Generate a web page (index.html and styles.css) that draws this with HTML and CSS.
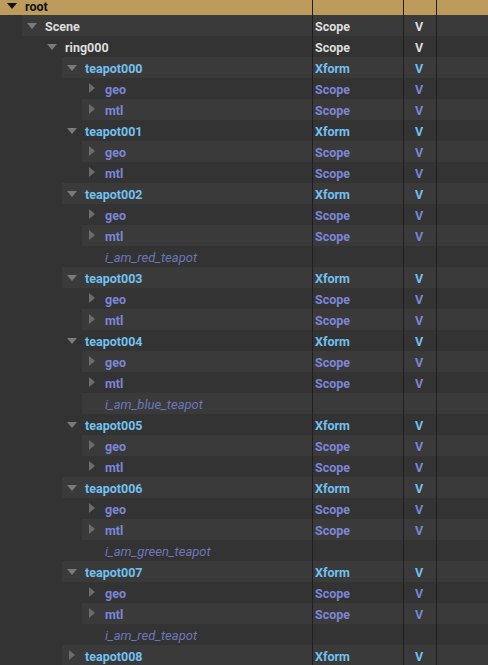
FILE: index.html
```html
<!DOCTYPE html>
<html>
<head>
<meta charset="utf-8">
<link rel="stylesheet" href="styles.css">
</head>
<body>
<div class="tree">
  <div class="row header">
    <div class="name l0"><div class="node"><span class="tri down dark"></span><span class="label">root</span></div></div>
    <div class="col c1"></div><div class="col c2"></div><div class="col c3"></div>
  </div>

  <div class="row odd">
    <div class="name l1"><div class="node"><span class="tri down"></span><span class="label white">Scene</span></div></div>
    <div class="col c1 white">Scope</div><div class="col c2 white">V</div><div class="col c3"></div>
  </div>
  <div class="row">
    <div class="name l2"><div class="node"><span class="tri down"></span><span class="label white">ring000</span></div></div>
    <div class="col c1 white">Scope</div><div class="col c2 white">V</div><div class="col c3"></div>
  </div>

  <div class="row odd">
    <div class="name l3"><div class="node"><span class="tri down"></span><span class="label blue">teapot000</span></div></div>
    <div class="col c1 blue">Xform</div><div class="col c2 blue">V</div><div class="col c3"></div>
  </div>
  <div class="row">
    <div class="name l4"><div class="node"><span class="tri right"></span><span class="label purple">geo</span></div></div>
    <div class="col c1 purple">Scope</div><div class="col c2 purple">V</div><div class="col c3"></div>
  </div>
  <div class="row odd">
    <div class="name l4"><div class="node"><span class="tri right"></span><span class="label purple">mtl</span></div></div>
    <div class="col c1 purple">Scope</div><div class="col c2 purple">V</div><div class="col c3"></div>
  </div>

  <div class="row">
    <div class="name l3"><div class="node"><span class="tri down"></span><span class="label blue">teapot001</span></div></div>
    <div class="col c1 blue">Xform</div><div class="col c2 blue">V</div><div class="col c3"></div>
  </div>
  <div class="row odd">
    <div class="name l4"><div class="node"><span class="tri right"></span><span class="label purple">geo</span></div></div>
    <div class="col c1 purple">Scope</div><div class="col c2 purple">V</div><div class="col c3"></div>
  </div>
  <div class="row">
    <div class="name l4"><div class="node"><span class="tri right"></span><span class="label purple">mtl</span></div></div>
    <div class="col c1 purple">Scope</div><div class="col c2 purple">V</div><div class="col c3"></div>
  </div>

  <div class="row odd">
    <div class="name l3"><div class="node"><span class="tri down"></span><span class="label blue">teapot002</span></div></div>
    <div class="col c1 blue">Xform</div><div class="col c2 blue">V</div><div class="col c3"></div>
  </div>
  <div class="row">
    <div class="name l4"><div class="node"><span class="tri right"></span><span class="label purple">geo</span></div></div>
    <div class="col c1 purple">Scope</div><div class="col c2 purple">V</div><div class="col c3"></div>
  </div>
  <div class="row odd">
    <div class="name l4"><div class="node"><span class="tri right"></span><span class="label purple">mtl</span></div></div>
    <div class="col c1 purple">Scope</div><div class="col c2 purple">V</div><div class="col c3"></div>
  </div>
  <div class="row">
    <div class="name l4"><div class="node"><span class="tri none"></span><span class="label note">i_am_red_teapot</span></div></div>
    <div class="col c1"></div><div class="col c2"></div><div class="col c3"></div>
  </div>

  <div class="row odd">
    <div class="name l3"><div class="node"><span class="tri down"></span><span class="label blue">teapot003</span></div></div>
    <div class="col c1 blue">Xform</div><div class="col c2 blue">V</div><div class="col c3"></div>
  </div>
  <div class="row">
    <div class="name l4"><div class="node"><span class="tri right"></span><span class="label purple">geo</span></div></div>
    <div class="col c1 purple">Scope</div><div class="col c2 purple">V</div><div class="col c3"></div>
  </div>
  <div class="row odd">
    <div class="name l4"><div class="node"><span class="tri right"></span><span class="label purple">mtl</span></div></div>
    <div class="col c1 purple">Scope</div><div class="col c2 purple">V</div><div class="col c3"></div>
  </div>

  <div class="row">
    <div class="name l3"><div class="node"><span class="tri down"></span><span class="label blue">teapot004</span></div></div>
    <div class="col c1 blue">Xform</div><div class="col c2 blue">V</div><div class="col c3"></div>
  </div>
  <div class="row odd">
    <div class="name l4"><div class="node"><span class="tri right"></span><span class="label purple">geo</span></div></div>
    <div class="col c1 purple">Scope</div><div class="col c2 purple">V</div><div class="col c3"></div>
  </div>
  <div class="row">
    <div class="name l4"><div class="node"><span class="tri right"></span><span class="label purple">mtl</span></div></div>
    <div class="col c1 purple">Scope</div><div class="col c2 purple">V</div><div class="col c3"></div>
  </div>
  <div class="row odd">
    <div class="name l4"><div class="node"><span class="tri none"></span><span class="label note">i_am_blue_teapot</span></div></div>
    <div class="col c1"></div><div class="col c2"></div><div class="col c3"></div>
  </div>

  <div class="row">
    <div class="name l3"><div class="node"><span class="tri down"></span><span class="label blue">teapot005</span></div></div>
    <div class="col c1 blue">Xform</div><div class="col c2 blue">V</div><div class="col c3"></div>
  </div>
  <div class="row odd">
    <div class="name l4"><div class="node"><span class="tri right"></span><span class="label purple">geo</span></div></div>
    <div class="col c1 purple">Scope</div><div class="col c2 purple">V</div><div class="col c3"></div>
  </div>
  <div class="row">
    <div class="name l4"><div class="node"><span class="tri right"></span><span class="label purple">mtl</span></div></div>
    <div class="col c1 purple">Scope</div><div class="col c2 purple">V</div><div class="col c3"></div>
  </div>

  <div class="row odd">
    <div class="name l3"><div class="node"><span class="tri down"></span><span class="label blue">teapot006</span></div></div>
    <div class="col c1 blue">Xform</div><div class="col c2 blue">V</div><div class="col c3"></div>
  </div>
  <div class="row">
    <div class="name l4"><div class="node"><span class="tri right"></span><span class="label purple">geo</span></div></div>
    <div class="col c1 purple">Scope</div><div class="col c2 purple">V</div><div class="col c3"></div>
  </div>
  <div class="row odd">
    <div class="name l4"><div class="node"><span class="tri right"></span><span class="label purple">mtl</span></div></div>
    <div class="col c1 purple">Scope</div><div class="col c2 purple">V</div><div class="col c3"></div>
  </div>
  <div class="row">
    <div class="name l4"><div class="node"><span class="tri none"></span><span class="label note">i_am_green_teapot</span></div></div>
    <div class="col c1"></div><div class="col c2"></div><div class="col c3"></div>
  </div>

  <div class="row odd">
    <div class="name l3"><div class="node"><span class="tri down"></span><span class="label blue">teapot007</span></div></div>
    <div class="col c1 blue">Xform</div><div class="col c2 blue">V</div><div class="col c3"></div>
  </div>
  <div class="row">
    <div class="name l4"><div class="node"><span class="tri right"></span><span class="label purple">geo</span></div></div>
    <div class="col c1 purple">Scope</div><div class="col c2 purple">V</div><div class="col c3"></div>
  </div>
  <div class="row odd">
    <div class="name l4"><div class="node"><span class="tri right"></span><span class="label purple">mtl</span></div></div>
    <div class="col c1 purple">Scope</div><div class="col c2 purple">V</div><div class="col c3"></div>
  </div>
  <div class="row">
    <div class="name l4"><div class="node"><span class="tri none"></span><span class="label note">i_am_red_teapot</span></div></div>
    <div class="col c1"></div><div class="col c2"></div><div class="col c3"></div>
  </div>

  <div class="row odd">
    <div class="name l3"><div class="node"><span class="tri right"></span><span class="label blue">teapot008</span></div></div>
    <div class="col c1 blue">Xform</div><div class="col c2 blue">V</div><div class="col c3"></div>
  </div>
</div>
</body>
</html>
```

FILE: styles.css
```css
html, body {
  margin: 0;
  padding: 0;
  background: #333333;
  overflow: hidden;
}

.tree {
  width: 488px;
  font-family: Roboto, "Liberation Sans", sans-serif;
  font-size: 12.5px;
  font-weight: bold;
}

.row {
  display: flex;
  height: 21px;
  background: #333333;
}

.name {
  width: 312px;
  flex: none;
  display: flex;
  box-sizing: border-box;
}

.l0 { padding-left: 2px; }
.l1 { padding-left: 22px; }
.l2 { padding-left: 42px; }
.l3 { padding-left: 62px; }
.l4 { padding-left: 82px; }

.node {
  flex: 1;
  display: flex;
  align-items: center;
  padding-top: 1px;
}

.odd .node,
.odd .col {
  background: #3a3a3a;
}

.row.header {
  height: 15px;
}

.header,
.header .node,
.header .col {
  background: #bd9b5c;
}

.header .node {
  align-items: flex-start;
  padding-top: 0;
}

.header .label {
  line-height: 13px;
}

.tri {
  width: 23px;
  height: 21px;
  flex: none;
  position: relative;
}

.header .tri {
  height: 15px;
}

.tri.down::before {
  content: "";
  position: absolute;
  left: 5px;
  top: 7px;
  border-left: 5.5px solid transparent;
  border-right: 5.5px solid transparent;
  border-top: 6px solid #7a7a7a;
}

.tri.dark.down::before {
  top: 3px;
  border-top-color: #111111;
}

.tri.right::before {
  content: "";
  position: absolute;
  left: 7px;
  top: 4px;
  border-top: 5.5px solid transparent;
  border-bottom: 5.5px solid transparent;
  border-left: 6px solid #6c6c6c;
}

.label {
  white-space: nowrap;
  color: #111111;
}

.col {
  display: flex;
  align-items: center;
  padding-top: 1px;
  border-left: 1px solid #1f1f1f;
  box-sizing: border-box;
}

.c1 { width: 91px; padding-left: 2px; }
.c2 { width: 33px; padding-left: 11px; }
.c3 { flex: 1; }

.white { color: #dedede; }
.blue { color: #72c1f0; }
.purple { color: #7c86d8; }
.note {
  color: #6d76b9;
  font-size: 13px;
  font-style: italic;
  font-weight: normal;
}
```
